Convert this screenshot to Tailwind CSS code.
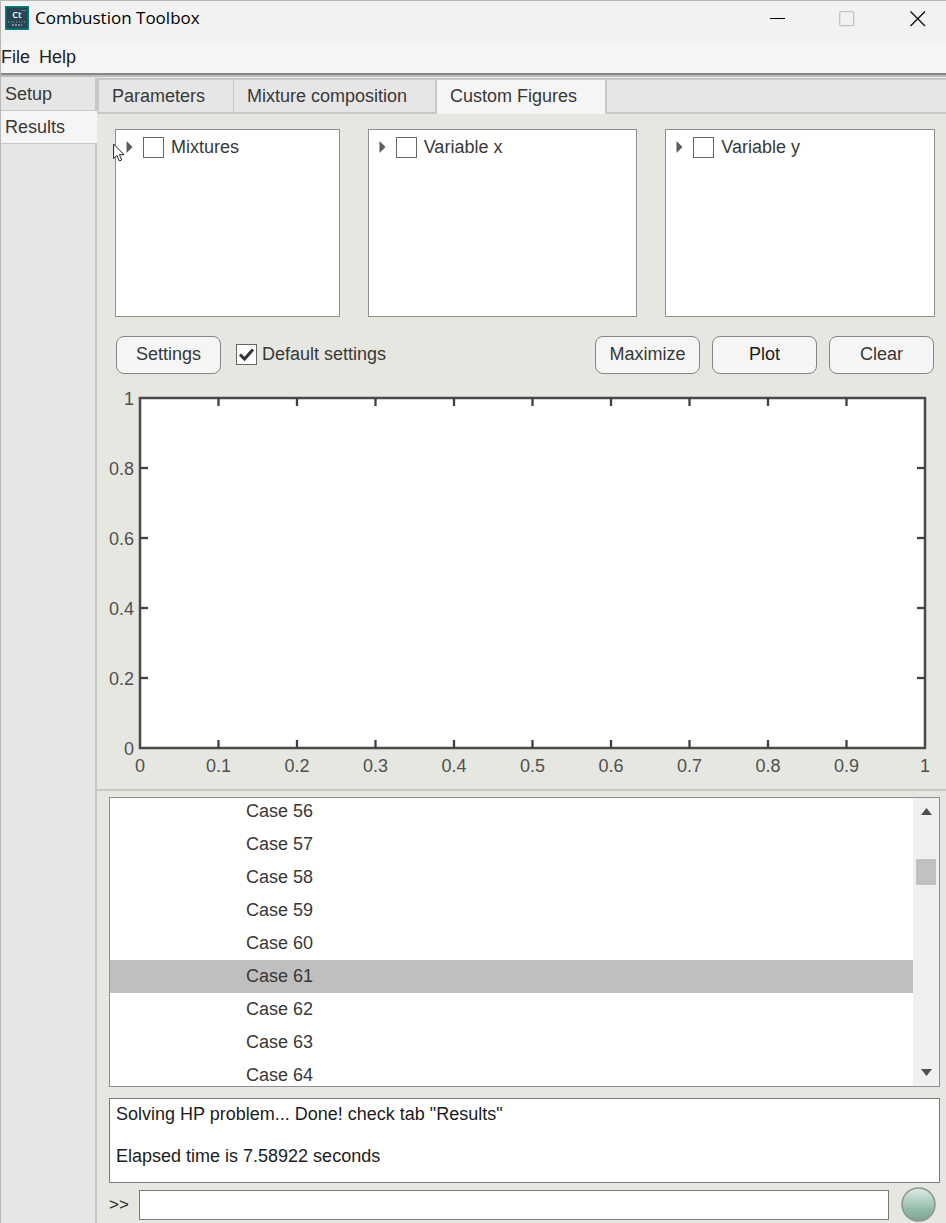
<!DOCTYPE html>
<html lang="en">
<head>
<meta charset="utf-8">
<title>Combustion Toolbox</title>
<script src="https://cdn.jsdelivr.net/npm/@tailwindcss/browser@4"></script>
</head>
<body class="relative flex min-h-screen flex-col overflow-x-hidden border-t border-l border-[#b8b8b8] bg-[#e6e7e1] font-['Liberation_Sans',Arial,sans-serif] text-[18px] leading-[22px] text-[#383838]">

<!-- Title bar -->
<header class="flex h-[41px] items-start bg-[#f2f2f2] text-black">
  <svg class="mt-[5px] ml-1 size-6" viewBox="0 0 24 24" aria-hidden="true">
    <rect width="24" height="24" fill="#008080"/>
    <rect x="1.5" y="1.5" width="21" height="21" fill="#264653"/>
    <text x="12" y="12" text-anchor="middle" font-family="Open Sans" font-weight="600" font-size="9" fill="#fff">Ct</text>
    <path d="M16.500 4.500H21" stroke="#7d959c" stroke-width=".8"/>
    <path d="M3 16H21" stroke="#a9babe" stroke-dasharray="1 1.700"/>
    <path d="M7 19H17" stroke="#d0dadd" stroke-dasharray="2 1"/>
  </svg>
  <h1 class="mt-1.5 ml-1.5 grow font-['Open_Sans','Noto_Sans',sans-serif] text-[17px] leading-[22px]">Combustion Toolbox</h1>
  <button type="button" aria-label="Minimize" class="mt-2 mr-[53px]"><svg class="block h-5 w-4" viewBox="0 0 16 20"><path d="M0 9.500H15" stroke="#000"/></svg></button>
  <button type="button" aria-label="Maximize window" disabled class="mt-2 mr-[55px]"><svg class="block h-5 w-4" viewBox="0 0 16 20"><rect x=".7" y="2.700" width="14" height="14" rx="1.500" fill="none" stroke="#c3c3c3" stroke-width="1.300"/></svg></button>
  <button type="button" aria-label="Close" class="mt-2 mr-5"><svg class="block h-5 w-4" viewBox="0 0 16 20"><path d="M.5 2.500 15 17M15 2.500.5 17" stroke="#111" stroke-width="1.400"/></svg></button>
</header>

<!-- Menu -->
<nav class="flex h-[31px] items-center gap-[9px] bg-[#f5f5f5] pb-0.5 text-[#222]">
  <button type="button">File</button>
  <button type="button">Help</button>
</nav>
<div class="h-1 border-t-2 border-b-2 border-t-[#858585] border-b-[#bdbdbd]"></div>

<div class="flex grow">
  <!-- Main sections -->
  <nav class="flex w-24 shrink-0 flex-col border-r-2 border-[#c8c8c8] bg-[#e6e6e6]">
    <button type="button" class="h-[34px] border-b border-[#c8c8c8] pl-1 text-left">Setup</button>
    <button type="button" class="-mr-0.5 h-[33px] border-b border-[#c8c8c8] bg-[#f5f5f5] pl-1 text-left">Results</button>
  </nav>

  <main class="flex min-w-0 grow flex-col">
    <!-- Result tabs -->
    <div role="tablist" class="mt-px flex h-9 border-t-2 border-l-2 border-[#c8c8c8] bg-[#e6e6e6]">
      <button type="button" role="tab" class="w-[135px] border-r border-b-2 border-[#c8c8c8] pl-[13px] text-left">Parameters</button>
      <button type="button" role="tab" class="w-[203px] border-r-2 border-b-2 border-[#c8c8c8] pl-[13px] text-left">Mixture composition</button>
      <button type="button" role="tab" aria-selected="true" class="w-[170px] border-r-2 border-[#c8c8c8] bg-[#f5f5f5] pb-0.5 pl-[13px] text-left">Custom Figures</button>
      <div class="grow border-b-2 border-[#c8c8c8]"></div>
    </div>

    <section class="flex flex-col border-b-2 border-[#c8c8c8] pt-[15px] pb-[9px]">
      <div class="mr-[11px] ml-[18px] grid grid-cols-[225fr_270fr_270fr] gap-7">
        <div class="h-[188px] border border-[#8f8f8f] bg-white pt-1.5 pl-2.5">
          <div class="flex items-center">
            <button type="button" aria-label="Expand Mixtures"><svg class="block h-3 w-[7px]" viewBox="0 0 7 12"><path d="M.5 0 6.500 6 .5 12Z" fill="#5c5c5c"/></svg></button>
            <label class="ml-2.5 flex items-center gap-[7px]"><input type="checkbox" class="size-[21px] appearance-none border border-[#666] bg-white">Mixtures</label>
          </div>
        </div>
        <div class="h-[188px] border border-[#8f8f8f] bg-white pt-1.5 pl-2.5">
          <div class="flex items-center">
            <button type="button" aria-label="Expand Variable x"><svg class="block h-3 w-[7px]" viewBox="0 0 7 12"><path d="M.5 0 6.500 6 .5 12Z" fill="#5c5c5c"/></svg></button>
            <label class="ml-2.5 flex items-center gap-[7px]"><input type="checkbox" class="size-[21px] appearance-none border border-[#666] bg-white">Variable x</label>
          </div>
        </div>
        <div class="h-[188px] border border-[#8f8f8f] bg-white pt-1.5 pl-2.5">
          <div class="flex items-center">
            <button type="button" aria-label="Expand Variable y"><svg class="block h-3 w-[7px]" viewBox="0 0 7 12"><path d="M.5 0 6.500 6 .5 12Z" fill="#5c5c5c"/></svg></button>
            <label class="ml-2.5 flex items-center gap-[7px]"><input type="checkbox" class="size-[21px] appearance-none border border-[#666] bg-white">Variable y</label>
          </div>
        </div>
      </div>

      <div class="mt-[19px] mr-3 ml-[19px] flex items-center">
        <button type="button" class="h-[38px] w-[105px] rounded-lg border border-[#858585] bg-[#f5f5f5] pb-0.5">Settings</button>
        <label class="ml-[15px] flex grow items-center gap-[5px] pb-0.5">
          <span class="grid">
            <input type="checkbox" checked class="col-start-1 row-start-1 size-[21px] appearance-none border border-[#666] bg-white">
            <svg class="pointer-events-none col-start-1 row-start-1 size-[21px]" viewBox="0 0 21 21"><path d="M4 10.500 8.500 15 17 5.500" fill="none" stroke="#333" stroke-width="3"/></svg>
          </span>Default settings</label>
        <div class="flex gap-3">
          <button type="button" class="h-[38px] w-[105px] rounded-lg border border-[#858585] bg-[#f5f5f5] pb-0.5">Maximize</button>
          <button type="button" class="h-[38px] w-[105px] rounded-lg border border-[#858585] bg-[#f5f5f5] pb-0.5 text-[#1a1a1a]">Plot</button>
          <button type="button" class="h-[38px] w-[105px] rounded-lg border border-[#858585] bg-[#f5f5f5] pb-0.5">Clear</button>
        </div>
      </div>

      <!-- Empty axes -->
      <div class="mt-6 mr-[21px] mb-8 ml-[43px]">
        <svg class="block h-[350px] w-full overflow-visible" role="img" aria-label="Axes from 0 to 1">
          <rect width="100%" height="100%" fill="#fff" stroke="#4a4a4a" stroke-width="2.500"/>
          <g stroke="#404040" stroke-width="2.300">
            <line x1="10%" x2="10%" y2="8"/><line x1="20%" x2="20%" y2="8"/><line x1="30%" x2="30%" y2="8"/><line x1="40%" x2="40%" y2="8"/><line x1="50%" x2="50%" y2="8"/><line x1="60%" x2="60%" y2="8"/><line x1="70%" x2="70%" y2="8"/><line x1="80%" x2="80%" y2="8"/><line x1="90%" x2="90%" y2="8"/>
            <svg y="100%" overflow="visible"><line x1="10%" x2="10%" y2="-8"/><line x1="20%" x2="20%" y2="-8"/><line x1="30%" x2="30%" y2="-8"/><line x1="40%" x2="40%" y2="-8"/><line x1="50%" x2="50%" y2="-8"/><line x1="60%" x2="60%" y2="-8"/><line x1="70%" x2="70%" y2="-8"/><line x1="80%" x2="80%" y2="-8"/><line x1="90%" x2="90%" y2="-8"/></svg>
            <line y1="20%" y2="20%" x2="8"/><line y1="40%" y2="40%" x2="8"/><line y1="60%" y2="60%" x2="8"/><line y1="80%" y2="80%" x2="8"/>
            <svg x="100%" overflow="visible"><line y1="20%" y2="20%" x2="-8"/><line y1="40%" y2="40%" x2="-8"/><line y1="60%" y2="60%" x2="-8"/><line y1="80%" y2="80%" x2="-8"/></svg>
          </g>
          <g fill="#505050" text-anchor="end">
            <text x="-6" y="0" dy="7">1</text><text x="-6" y="20%" dy="7">0.8</text><text x="-6" y="40%" dy="7">0.6</text><text x="-6" y="60%" dy="7">0.4</text><text x="-6" y="80%" dy="7">0.2</text><text x="-6" y="100%" dy="7">0</text>
          </g>
          <g fill="#505050" text-anchor="middle">
            <text x="0" y="100%" dy="24">0</text><text x="10%" y="100%" dy="24">0.1</text><text x="20%" y="100%" dy="24">0.2</text><text x="30%" y="100%" dy="24">0.3</text><text x="40%" y="100%" dy="24">0.4</text><text x="50%" y="100%" dy="24">0.5</text><text x="60%" y="100%" dy="24">0.6</text><text x="70%" y="100%" dy="24">0.7</text><text x="80%" y="100%" dy="24">0.8</text><text x="90%" y="100%" dy="24">0.9</text><text x="100%" y="100%" dy="24">1</text>
          </g>
        </svg>
      </div>
    </section>

    <!-- Case list -->
    <div class="mt-1.5 mr-1.5 ml-3 flex h-[290px] overflow-hidden border border-[#8f8f8f] bg-white">
      <ul class="-mt-[3px] grow leading-[33px]">
        <li class="h-[33px] pl-[136px]">Case 56</li>
        <li class="h-[33px] pl-[136px]">Case 57</li>
        <li class="h-[33px] pl-[136px]">Case 58</li>
        <li class="h-[33px] pl-[136px]">Case 59</li>
        <li class="h-[33px] pl-[136px]">Case 60</li>
        <li class="h-[33px] bg-[#bfbfbf] pl-[136px]">Case 61</li>
        <li class="h-[33px] pl-[136px]">Case 62</li>
        <li class="h-[33px] pl-[136px]">Case 63</li>
        <li class="h-[33px] pl-[136px]">Case 64</li>
      </ul>
      <div class="flex w-[26px] flex-col items-center bg-[#f0f0f0] pt-2.5 pb-2.5">
        <button type="button" aria-label="Scroll up"><svg class="block h-[7px] w-[11px]" viewBox="0 0 11 7"><path d="M5.500 0 11 7H0Z" fill="#505050"/></svg></button>
        <div class="mt-11 h-[26px] w-5 bg-[#c1c1c1]"></div>
        <button type="button" aria-label="Scroll down" class="mt-auto"><svg class="block h-[7px] w-[11px]" viewBox="0 0 11 7"><path d="M0 0H11L5.500 7Z" fill="#505050"/></svg></button>
      </div>
    </div>

    <!-- Console -->
    <div role="log" class="mt-[11px] mr-1.5 ml-3 h-[85px] border border-[#7a7a7a] bg-white pt-[5px] pl-1.5 leading-[21px] text-[#1c1c1c]">
      <p>Solving HP problem... Done! check tab "Results"</p>
      <p class="mt-[21px]">Elapsed time is 7.58922 seconds</p>
    </div>
    <div class="mt-1 mr-2.5 ml-3 flex items-center">
      <label for="command" class="w-[30px] text-[17px] text-[#222]">&gt;&gt;</label>
      <input id="command" type="text" class="h-[30px] min-w-0 grow border border-[#7a7a7a] bg-white px-1.5">
      <svg class="ml-3 block size-[35px]" viewBox="0 0 35 35" role="img" aria-label="Status: ready">
        <defs><linearGradient id="lamp" x2="0" y2="1"><stop offset=".05" stop-color="#d8e8e1"/><stop offset=".45" stop-color="#a9cabd"/><stop offset=".65" stop-color="#92baa9"/><stop offset="1" stop-color="#7fa293"/></linearGradient></defs>
        <circle cx="17.500" cy="17.500" r="16.500" fill="url(#lamp)" stroke="#8c9691" stroke-width="1.500"/>
      </svg>
    </div>
  </main>
</div>

<!-- Mouse pointer -->
<svg class="pointer-events-none absolute top-[142px] left-[112px] h-[19px] w-3" viewBox="0 0 12 19" aria-hidden="true"><path d="M.6 1V15.500L4 12.500 6.300 18 8.700 17 6.400 11.700H11Z" fill="#fff" stroke="#222"/></svg>
</body>
</html>
